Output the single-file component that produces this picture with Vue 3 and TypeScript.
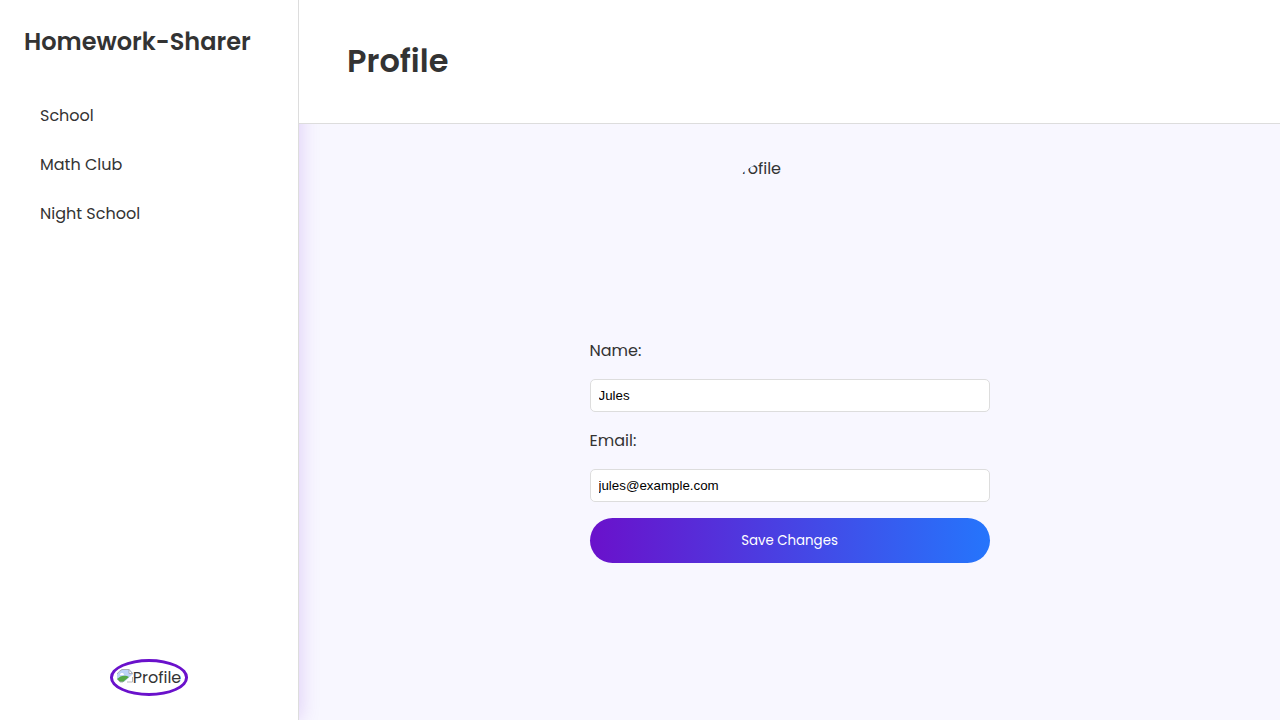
<script setup lang="ts">
import { ref } from 'vue'

interface Group {
  id: number
  name: string
}

const groups: Group[] = [
  { id: 1, name: 'School' },
  { id: 2, name: 'Math Club' },
  { id: 3, name: 'Night School' },
]

const name = ref('Jules')
const email = ref('jules@example.com')
</script>

<template>
  <div class="layout">
    <aside class="sidebar">
      <h1 class="brand">Homework-Sharer</h1>
      <nav class="groups">
        <a v-for="group in groups" :key="group.id" class="group" href="#">{{ group.name }}</a>
      </nav>
      <a class="badge" href="#">
        <svg class="missing" viewBox="0 0 16 16" aria-hidden="true">
          <path d="M0 6l5-5h7l4 4v1L7 14H3L0 11z" fill="#bdd3f7" />
          <path d="M0 6q2-3 5-4.500h7" fill="none" stroke="#a9adb5" />
          <path d="M12 1.500v4h3.500z" fill="#fff" stroke="#a9adb5" />
          <path d="M3 7c0-1.500 1-2 2-2s2 .5 2 2z" fill="#fff" />
          <path d="M0 11c3-3 6-4 10-3l2 1-6 5H3z" fill="#56a846" />
          <path d="M1 12l2 2h3" fill="none" stroke="#a9adb5" />
          <path d="M10 14h5.500V9" fill="none" stroke="#b5b8be" />
        </svg>
        <span>Profile</span>
      </a>
    </aside>

    <div class="page">
      <header class="header">
        <h2 class="title">Profile</h2>
      </header>
      <main class="content">
        <div class="avatar">Profile</div>
        <form class="form" @submit.prevent>
          <label class="label" for="name">Name:</label>
          <input id="name" v-model="name" class="field" type="text" />
          <label class="label" for="email">Email:</label>
          <input id="email" v-model="email" class="field" type="email" />
          <button class="save" type="submit">Save Changes</button>
        </form>
      </main>
    </div>
  </div>
</template>

<style>
body {
  margin: 0;
  background: #f8f7ff;
}
</style>

<style scoped>
.layout {
  display: flex;
  min-height: 100vh;
  color: #333;
  font-family: Poppins, Inter, "Liberation Sans", sans-serif;
  font-size: 16px;
  line-height: 24px;
}

.sidebar {
  box-sizing: border-box;
  display: flex;
  flex-direction: column;
  flex: 0 0 299px;
  padding: 24px;
  background: #fff;
  border-right: 1px solid #ddd;
  box-shadow: 0 0 20px rgba(106, 17, 203, 0.2);
}

.brand {
  margin: 0 0 31px;
  font-size: 24px;
  font-weight: 600;
  line-height: 36px;
}

.groups {
  display: flex;
  flex-direction: column;
}

.group {
  padding: 12px 16px;
  line-height: 25px;
  color: inherit;
  text-decoration: none;
}

.badge {
  display: flex;
  align-items: center;
  align-self: center;
  margin-top: auto;
  padding: 3px 4px;
  border: 3px solid #6a11cb;
  border-radius: 50%;
  line-height: 25px;
  color: inherit;
  text-decoration: none;
}

.missing {
  width: 16px;
  height: 16px;
  margin-bottom: 4px;
}

.page {
  display: flex;
  flex-direction: column;
  flex: 1;
  min-width: 0;
}

.header {
  position: relative;
  padding: 36px 48px 37px;
  background: #fff;
  border-bottom: 1px solid #ddd;
}

.title {
  margin: 0;
  font-size: 32px;
  font-weight: 600;
  line-height: 50px;
}

.content {
  display: flex;
  flex-direction: column;
  align-items: center;
  gap: 32px;
  padding: 32px 48px;
}

.avatar {
  box-sizing: border-box;
  width: 150px;
  height: 150px;
  padding-left: 18px;
  border-radius: 50%;
  line-height: 26px;
  overflow: hidden;
}

.form {
  display: flex;
  flex-direction: column;
  gap: 16px;
  width: 100%;
  max-width: 400px;
}

.label {
  line-height: 25px;
}

.field {
  box-sizing: border-box;
  width: 100%;
  height: 33px;
  padding: 8px;
  border: 1px solid #ddd;
  border-radius: 5px;
  background: #fff;
  color: #000;
  font-family: "Liberation Sans", Arial, sans-serif;
}

.save {
  padding: 12px 24px;
  border: 0;
  border-radius: 25px;
  background: linear-gradient(to right, #6a11cb, #2575fc);
  color: #fff;
  font-family: inherit;
  line-height: 21px;
  cursor: pointer;
}
</style>
